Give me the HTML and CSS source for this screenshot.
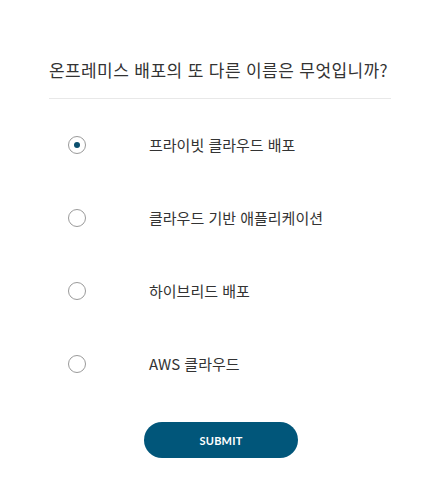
FILE: index.html
```html
<!DOCTYPE html>
<html lang="ko">
<head>
<meta charset="utf-8">
<link rel="stylesheet" href="styles.css">
</head>
<body>
<div class="quiz">
  <div class="question">온프레미스 배포의 또 다른 이름은 무엇입니까?</div>
  <div class="options">
    <label class="option"><span class="radio checked"></span><span class="text">프라이빗 클라우드 배포</span></label>
    <label class="option"><span class="radio"></span><span class="text">클라우드 기반 애플리케이션</span></label>
    <label class="option"><span class="radio"></span><span class="text">하이브리드 배포</span></label>
    <label class="option"><span class="radio"></span><span class="text">AWS 클라우드</span></label>
  </div>
  <div class="actions"><button class="submit">SUBMIT</button></div>
</div>
</body>
</html>
```
FILE: styles.css
```css
html, body { margin: 0; padding: 0; background: #fff; }
body { font-family: "Noto Sans CJK KR", "Noto Sans", sans-serif; color: #333; }
.quiz { width: 342px; margin-left: 49px; padding-top: 57px; }
.question { font-size: 17px; line-height: 25px; letter-spacing: 0.4px; color: #333; padding-bottom: 16px; border-bottom: 1px solid #e8e8e8; }
.options { padding-top: 9px; display: flex; flex-direction: column; }
.option { height: 73px; display: flex; align-items: center; }
.radio { width: 16px; height: 16px; border: 1px solid #9a9a9a; border-radius: 50%; margin-left: 19px; display: flex; align-items: center; justify-content: center; box-sizing: content-box; flex: none; }
.radio.checked::after { content: ""; width: 6px; height: 6px; border-radius: 50%; background: #0b4f6e; }
.text { margin-left: 63px; font-size: 15px; color: #333; }
.actions { margin-top: 22px; display: flex; padding-left: 95px; }
.submit { width: 154px; height: 36px; border: none; border-radius: 18px; background: #01567a; color: #fff; font-family: Lato, sans-serif; font-weight: 700; font-size: 11px; letter-spacing: 0.2px; }
```
